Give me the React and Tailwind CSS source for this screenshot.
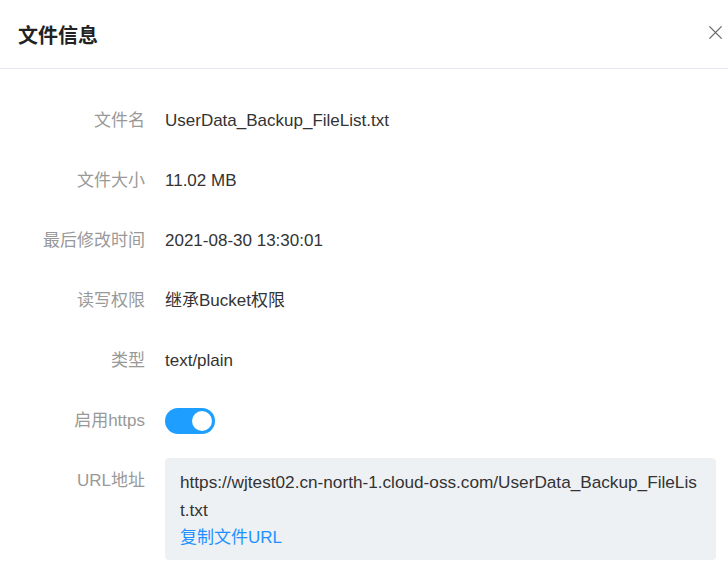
import React from 'react';

const rows = [
  { label: '文件名', value: 'UserData_Backup_FileList.txt' },
  { label: '文件大小', value: '11.02 MB' },
  { label: '最后修改时间', value: '2021-08-30 13:30:01' },
  { label: '读写权限', value: '继承Bucket权限' },
  { label: '类型', value: 'text/plain' },
];

const App = () => {
  return (
    <div
      className="w-[728px] h-[575px] bg-white overflow-hidden"
      style={{ fontFamily: '"Liberation Sans", "Noto Sans CJK SC", sans-serif' }}
    >
      {/* Header */}
      <div className="h-[69px] flex items-center justify-between pl-[18px] pr-[5px] border-b border-[#e4e7ed]">
        <h2 className="text-[20px] font-bold text-[#222] pt-[3px]">文件信息</h2>
        <button className="w-[16px] h-[16px] mb-[3px] flex items-center justify-center text-[#666]">
          <svg width="15" height="15" viewBox="0 0 16 16" fill="none" stroke="currentColor" strokeWidth="1.4">
            <path d="M1.5 1.5 L14.5 14.5 M14.5 1.5 L1.5 14.5" />
          </svg>
        </button>
      </div>

      {/* Details */}
      <div className="pt-[22px] text-[17px]">
        {rows.map((row) => (
          <div key={row.label} className="flex items-center h-[60px]">
            <div className="w-[145px] text-right text-[#999]">{row.label}</div>
            <div className="ml-[20px] text-[#333]">{row.value}</div>
          </div>
        ))}

        <div className="flex items-center h-[60px]">
          <div className="w-[145px] text-right text-[#999]">启用https</div>
          <div className="ml-[20px]">
            <div className="w-[50px] h-[26px] rounded-full bg-[#1e9fff] flex items-center justify-end pr-[3px]">
              <div className="w-[20px] h-[20px] rounded-full bg-white" />
            </div>
          </div>
        </div>

        <div className="flex items-start mt-[7px]">
          <div className="w-[145px] text-right text-[#999] pt-[10px] leading-[26px]">URL地址</div>
          <div className="ml-[20px] mr-[12px] flex-1 bg-[#eef1f4] rounded-[4px] pl-[15px] pr-[17px] pt-[11px] pb-[8px] leading-[27.5px]">
            <div className="text-[#333] text-[17.2px] break-all">
              https://wjtest02.cn-north-1.cloud-oss.com/UserData_Backup_FileList.txt
            </div>
            <div className="text-[#1e90ff] cursor-pointer">复制文件URL</div>
          </div>
        </div>
      </div>
    </div>
  );
};

export default App;
